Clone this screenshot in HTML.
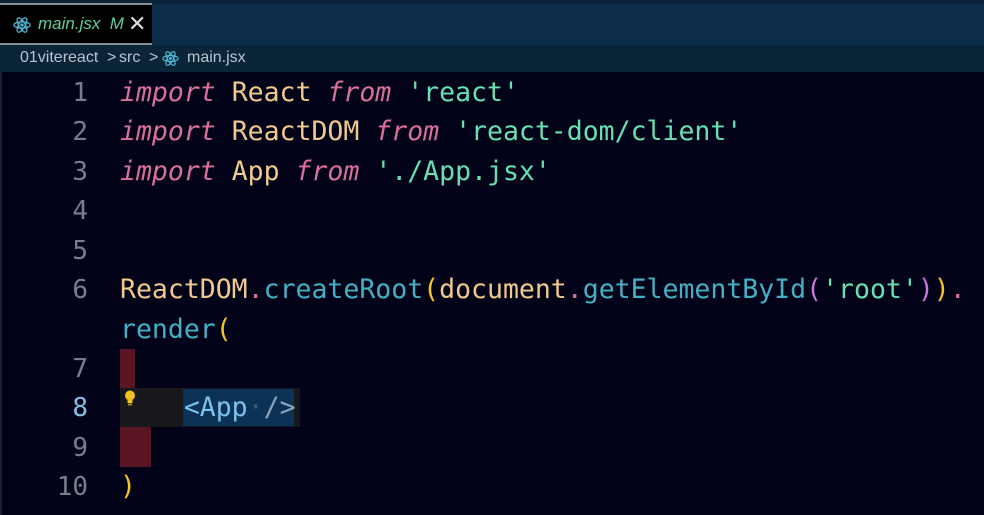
<!DOCTYPE html>
<html><head><meta charset="utf-8"><style>
*{margin:0;padding:0;box-sizing:border-box}
html,body{width:984px;height:515px;overflow:hidden;background:#020318}
body{position:relative;font-family:"DejaVu Sans Mono","Liberation Mono",monospace}
.tabbar{position:absolute;left:0;top:0;width:984px;height:45px;background:#0b2d49}
.tabbar .strip{position:absolute;left:0;top:0;width:984px;height:4px;background:#0a2236}
.tab{position:absolute;left:0;top:3px;width:152px;height:42px;background:#000;border-top:2px solid #8a8f96;border-bottom:2px solid #8a8f96}
.tab .name{position:absolute;left:38px;top:9px;font-family:"Liberation Sans",sans-serif;font-style:italic;font-size:17px;color:#5fcf9a}
.tab .x{position:absolute;left:128px;top:6px;font-family:"Liberation Sans",sans-serif;font-size:22px;color:#ddd}
.crumb{position:absolute;left:0;top:45px;width:984px;height:27px;background:#0a2438;font-family:"Liberation Sans",sans-serif;font-size:16px;color:#b9c4cf}
.crumb span{position:absolute;top:4px}
.gutter{position:absolute;left:0;top:72px;width:100px;height:443px;border-left:2px solid #1a2230}
.wrap{position:absolute;left:0;top:0;width:984px;height:515px;overflow:hidden}
.ln{position:absolute;left:28px;width:60px;text-align:right;font-size:26px;color:#76808c;line-height:40px;height:40px}
.code{position:absolute;left:120px;font-size:26.5px;line-height:40px;height:40px;white-space:pre;color:#f0c98e}
.k{color:#d9709a;font-style:italic}.s{color:#68e0b2}.m{color:#45b0c4}.y{color:#f4c724}.p{color:#c678dd}.d{color:#d9709a}
</style></head><body>
<div class="tabbar"><div class="strip"></div>
<div class="tab">
<svg style="position:absolute;left:13px;top:11px" width="18" height="18" viewBox="-10 -10 20 20"><g fill="none" stroke="#4fb8d6" stroke-width="1.4"><ellipse rx="9" ry="3.5"/><ellipse rx="9" ry="3.5" transform="rotate(60)"/><ellipse rx="9" ry="3.5" transform="rotate(120)"/></g><circle r="1.8" fill="#4fb8d6"/></svg>
<span class="name">main.jsx&nbsp;&nbsp;M</span><span class="x">✕</span></div>
</div>
<div class="crumb"><span style="left:20px">01vitereact</span><span style="left:107px">&gt;</span><span style="left:119px">src</span><span style="left:149px">&gt;</span>
<svg style="position:absolute;left:162px;top:5px" width="17" height="17" viewBox="-10 -10 20 20"><g fill="none" stroke="#4fb8d6" stroke-width="1.4"><ellipse rx="9" ry="3.5"/><ellipse rx="9" ry="3.5" transform="rotate(60)"/><ellipse rx="9" ry="3.5" transform="rotate(120)"/></g><circle r="1.8" fill="#4fb8d6"/></svg>
<span style="left:187px">main.jsx</span></div>
<div class="gutter"></div>
<div class="wrap">
<div style="position:absolute;left:120px;top:349px;width:15px;height:39px;background:#5a1422"></div>
<div style="position:absolute;left:120px;top:388px;width:180px;height:39px;background:#17171c"></div>
<div style="position:absolute;left:183px;top:389px;width:111px;height:37px;background:#0c3356"></div>
<div style="position:absolute;left:120px;top:427px;width:31px;height:40px;background:#5a1422"></div>
<svg style="position:absolute;left:123px;top:389px" width="14" height="18" viewBox="0 0 14 18"><circle cx="7" cy="6.5" r="5" fill="#f0c020"/><rect x="4.5" y="10" width="5" height="4" fill="#f0c020"/><rect x="5" y="14.5" width="4" height="2" fill="#b08a10"/></svg>
<div class="ln" style="top:73px">1</div>
<div class="ln" style="top:112px">2</div>
<div class="ln" style="top:152px">3</div>
<div class="ln" style="top:191px">4</div>
<div class="ln" style="top:231px">5</div>
<div class="ln" style="top:270px">6</div>
<div class="ln" style="top:349px">7</div>
<div class="ln" style="top:388px;color:#86c0e8">8</div>
<div class="ln" style="top:428px">9</div>
<div class="ln" style="top:467px">10</div>
<div class="code" style="top:73px"><span class="k">import</span> React <span class="k">from</span> <span class="s">'react'</span></div>
<div class="code" style="top:112px"><span class="k">import</span> ReactDOM <span class="k">from</span> <span class="s">'react-dom/client'</span></div>
<div class="code" style="top:152px"><span class="k">import</span> App <span class="k">from</span> <span class="s">'./App.jsx'</span></div>
<div class="code" style="top:270px">ReactDOM<span class="d">.</span><span class="m">createRoot</span><span class="y">(</span>document<span class="d">.</span><span class="m">getElementById</span><span class="p">(</span><span class="s">'root'</span><span class="p">)</span><span class="y">)</span><span class="d">.</span></div>
<div class="code" style="top:310px"><span class="m">render</span><span class="y">(</span></div>
<div class="code" style="top:388px;color:#7cc0ef">    &lt;App<span style="color:#3d5a78">·</span><span style="color:#8aa4bc">/&gt;</span></div>
<div class="code" style="top:467px"><span class="y">)</span></div>
</div>
</body></html>
